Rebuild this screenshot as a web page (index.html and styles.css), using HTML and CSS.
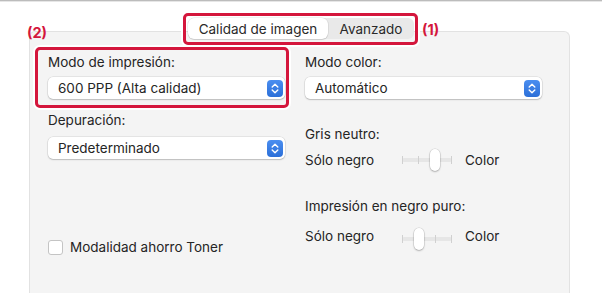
FILE: index.html
```html
<!DOCTYPE html>
<html lang="es">
<head>
<meta charset="utf-8">
<link rel="stylesheet" href="styles.css">
</head>
<body>
<div class="window">
  <div class="topline"></div>

  <div class="tabs">
    <div class="tab active">Calidad de imagen</div>
    <div class="tab">Avanzado</div>
  </div>
  <div class="mark mark-tabs"></div>
  <div class="note note-1">(1)</div>
  <div class="note note-2">(2)</div>
  <div class="mark mark-mode"></div>

  <div class="panel">
    <div class="col col-left">
      <div class="label first">Modo de impresión:</div>
      <div class="popup"><span>600 PPP (Alta calidad)</span><span class="stepper"><svg width="8" height="11" viewBox="0 0 8 11"><path d="M1.2 4 L4 1.3 L6.8 4 M1.2 7 L4 9.7 L6.8 7" fill="none" stroke="#fff" stroke-width="1.4" stroke-linecap="round" stroke-linejoin="round"/></svg></span></div>
      <div class="label l-dep">Depuración:</div>
      <div class="popup p-dep"><span>Predeterminado</span><span class="stepper"><svg width="8" height="11" viewBox="0 0 8 11"><path d="M1.2 4 L4 1.3 L6.8 4 M1.2 7 L4 9.7 L6.8 7" fill="none" stroke="#fff" stroke-width="1.4" stroke-linecap="round" stroke-linejoin="round"/></svg></span></div>
      <label class="check"><span class="box"></span><span>Modalidad ahorro Toner</span></label>
    </div>
    <div class="col col-right">
      <div class="label first">Modo color:</div>
      <div class="popup"><span>Automático</span><span class="stepper"><svg width="8" height="11" viewBox="0 0 8 11"><path d="M1.2 4 L4 1.3 L6.8 4 M1.2 7 L4 9.7 L6.8 7" fill="none" stroke="#fff" stroke-width="1.4" stroke-linecap="round" stroke-linejoin="round"/></svg></span></div>
      <div class="label l-gris">Gris neutro:</div>
      <div class="slider-row s-gris">
        <span class="s-label">Sólo negro</span>
        <span class="slider">
          <span class="track"></span>
          <span class="tick t0"></span><span class="tick t1"></span><span class="tick t2"></span><span class="tick t3"></span>
          <span class="thumb pos2"></span>
        </span>
        <span class="s-end">Color</span>
      </div>
      <div class="label l-puro">Impresión en negro puro:</div>
      <div class="slider-row s-puro">
        <span class="s-label">Sólo negro</span>
        <span class="slider">
          <span class="track"></span>
          <span class="tick t0"></span><span class="tick t1"></span><span class="tick t2"></span><span class="tick t3"></span>
          <span class="thumb pos1"></span>
        </span>
        <span class="s-end">Color</span>
      </div>
    </div>
  </div>
</div>
</body>
</html>
```

FILE: styles.css
```css
html, body {
  margin: 0;
  padding: 0;
  background: #fff;
}
body {
  font-family: Inter, "Noto Sans", sans-serif;
  font-size: 13.5px;
  color: #252525;
  width: 602px;
  height: 293px;
  overflow: hidden;
}
.window {
  position: relative;
  height: 293px;
  overflow: hidden;
}
.topline {
  height: 1px;
  background: #bcbcbc;
  border-bottom: 1px solid #e6e6e6;
}
.panel {
  margin: 29px 0 0 29px;
  width: 541px;
  height: 262px;
  background: #f4f4f4;
  border: 1px solid #e2e2e2;
  border-bottom: none;
  border-radius: 6px 6px 0 0;
  display: flex;
  padding-left: 18px;
  box-sizing: border-box;
}
.col {
  display: flex;
  flex-direction: column;
  align-items: flex-start;
}
.col-left { width: 257px; }
.col-right { width: 240px; }
.label {
  line-height: 16px;
  height: 16px;
  white-space: nowrap;
}
.label.first { margin-top: 22px; }
.popup {
  margin-top: 7px;
  width: 237px;
  height: 22px;
  background: #fff;
  border-radius: 5px;
  box-shadow: 0 0 0 0.5px rgba(0,0,0,0.12), 0 1px 1.5px rgba(0,0,0,0.18);
  display: flex;
  align-items: center;
  justify-content: space-between;
  padding: 0 2px 0 10px;
  box-sizing: border-box;
}
.stepper {
  width: 16px;
  height: 17px;
  border-radius: 4px;
  background: linear-gradient(#4a8ef0, #2c6fd8);
  display: flex;
  align-items: center;
  justify-content: center;
}
.l-dep { margin-top: 13px; }
.p-dep { margin-top: 9px; }
.check {
  margin-top: 80px;
  display: flex;
  align-items: center;
  height: 16px;
  line-height: 16px;
}
.box {
  width: 13px;
  height: 13px;
  border: 1px solid #c4c4c4;
  border-radius: 3px;
  background: #fff;
  margin-right: 7px;
  box-sizing: content-box;
}
.l-gris { margin-top: 27px; }
.l-puro { margin-top: 26px; }
.slider-row {
  display: flex;
  align-items: center;
  height: 24px;
}
.s-gris { margin-top: 6px; }
.s-puro { margin-top: 10px; }
.s-puro .slider { margin-top: 6px; }
.s-label { width: 97px; }
.slider {
  position: relative;
  width: 50px;
  height: 24px;
  margin-right: 13px;
}
.track {
  position: absolute;
  left: 0;
  right: 0;
  top: 10px;
  height: 4px;
  background: #e6e6e6;
  border-radius: 2px;
}
.tick {
  position: absolute;
  top: 8px;
  width: 1px;
  height: 8px;
  background: #d0d0d0;
}
.t0 { left: 0; }
.t1 { left: 16px; }
.t2 { left: 33px; }
.t3 { left: 49px; }
.thumb {
  position: absolute;
  top: 1px;
  width: 10px;
  height: 22px;
  background: #fff;
  border-radius: 5px;
  box-shadow: 0 0 0 0.5px rgba(0,0,0,0.15), 0 1px 2px rgba(0,0,0,0.22);
}
.pos1 { left: 12px; }
.pos2 { left: 28px; }

/* segmented tab control */
.tabs {
  position: absolute;
  left: 188px;
  top: 18px;
  width: 226px;
  height: 21px;
  background: #e9e9e9;
  border-radius: 6px;
  display: flex;
  align-items: stretch;
  box-sizing: border-box;
}
.tab {
  display: flex;
  align-items: center;
  justify-content: center;
  white-space: nowrap;
  color: #2a2a2a;
}
.tab.active {
  width: 140px;
  background: #fff;
  border-radius: 6px;
  box-shadow: 0 0 0 0.5px rgba(0,0,0,0.1), 0 1px 1px rgba(0,0,0,0.12);
}
.tab:not(.active) { flex: 1; }

/* annotations */
.mark {
  position: absolute;
  border: 3px solid #d4163c;
  border-radius: 5px;
  box-shadow: 0 0 0 2px #fff;
  box-sizing: border-box;
}
.mark-tabs {
  left: 183px;
  top: 13px;
  width: 235px;
  height: 32px;
}
.mark-mode {
  left: 35px;
  top: 47px;
  width: 254px;
  height: 61px;
}
.note {
  position: absolute;
  color: #d4163c;
  font-weight: 700;
  font-size: 14.5px;
  line-height: 16px;
}
.note-1 { left: 422px; top: 22px; }
.note-2 { left: 27px; top: 25px; }
```
